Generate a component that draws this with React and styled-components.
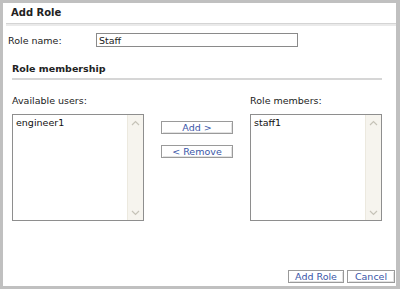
import React from "react";
import styled, { createGlobalStyle } from "styled-components";

const Global = createGlobalStyle`
  html, body {
    margin: 0;
    padding: 0;
    background: #c0c0c0;
  }
  body {
    font-family: "DejaVu Sans", Verdana, sans-serif;
    font-size: 9.5px;
    color: #222;
  }
`;

const Panel = styled.div`
  box-sizing: border-box;
  margin: 3px 4px 0 3px;
  height: 283px;
  background: #fff;
  display: flex;
  flex-direction: column;
`;

const Header = styled.div`
  font-weight: bold;
  font-size: 10px;
  padding: 4px 0 0 5px;
  height: 16px;
  margin-left: 3px;
  border-bottom: 1px solid #d4d4d4;
  box-shadow: 0 2px 0 #eaeaea;
`;

const Body = styled.div`
  flex: 1;
  padding: 0 14px 0 3px;
  display: flex;
  flex-direction: column;
`;

const FieldRow = styled.div`
  display: flex;
  align-items: center;
  margin-top: 9px;
`;

const Label = styled.label`
  box-sizing: border-box;
  width: 90px;
  padding-left: 2px;
`;

const TextInput = styled.input`
  box-sizing: border-box;
  width: 202px;
  height: 14px;
  border: 1px solid #8a8a8a;
  padding: 0 2px;
  font: inherit;
  color: #222;
  outline: none;
`;

const Section = styled.div`
  margin: 16px 0 0 6px;
  font-weight: bold;
  padding-bottom: 4px;
  border-bottom: 2px solid #d6d6d6;
`;

const Columns = styled.div`
  display: flex;
  align-items: flex-start;
  margin: 15px 0 0 6px;
`;

const ListColumn = styled.div`
  display: flex;
  flex-direction: column;
  width: 132px;
`;

const ListLabel = styled.div`
  height: 13px;
  margin-bottom: 6px;
`;

const ListBox = styled.div`
  box-sizing: border-box;
  height: 107px;
  border: 1px solid #8e8e8e;
  display: flex;
`;

const Items = styled.div`
  flex: 1;
  padding: 2px 3px;
  color: #111;
`;

const ScrollTrack = styled.div`
  width: 15px;
  background: #f6f4ee;
  border-left: 1px solid #ece9df;
  display: flex;
  flex-direction: column;
  justify-content: space-between;
`;

const Arrow = styled.div`
  height: 15px;
  display: flex;
  align-items: center;
  justify-content: center;
`;

const Middle = styled.div`
  flex: 1;
  display: flex;
  flex-direction: column;
  align-items: center;
  padding-top: 26px;
  gap: 11px;
`;

const Button = styled.button`
  box-sizing: border-box;
  width: ${p => p.$w}px;
  height: 13px;
  padding: 0;
  font: inherit;
  line-height: 10px;
  color: #3a56a8;
  background: #fff;
  border: 1px solid #9a9a9a;
  box-shadow: inset 1px 1px 0 #fff, inset -1px -1px 0 #e2e2e2;
`;

const Footer = styled.div`
  display: flex;
  justify-content: flex-end;
  gap: 3px;
  padding: 0 1px 3px 0;
  margin-top: auto;
`;

const Chevron = ({ up }) => (
  <svg width="9" height="6" viewBox="0 0 9 6">
    <path
      d={up ? "M1 5 L4.5 1.5 L8 5" : "M1 1 L4.5 4.5 L8 1"}
      fill="none"
      stroke="#c6c3b8"
      strokeWidth="1.2"
    />
  </svg>
);

const UserList = ({ title, items }) => (
  <ListColumn>
    <ListLabel>{title}</ListLabel>
    <ListBox>
      <Items>
        {items.map(i => (
          <div key={i}>{i}</div>
        ))}
      </Items>
      <ScrollTrack>
        <Arrow>
          <Chevron up />
        </Arrow>
        <Arrow>
          <Chevron />
        </Arrow>
      </ScrollTrack>
    </ListBox>
  </ListColumn>
);

export default function App() {
  return (
    <>
      <Global />
      <Panel>
        <Header>Add Role</Header>
        <Body>
          <FieldRow>
            <Label>Role name:</Label>
            <TextInput defaultValue="Staff" />
          </FieldRow>
          <Section>Role membership</Section>
          <Columns>
            <UserList title="Available users:" items={["engineer1"]} />
            <Middle>
              <Button $w={72}>Add &gt;</Button>
              <Button $w={72}>&lt; Remove</Button>
            </Middle>
            <UserList title="Role members:" items={["staff1"]} />
          </Columns>
        </Body>
        <Footer>
          <Button $w={56}>Add Role</Button>
          <Button $w={48}>Cancel</Button>
        </Footer>
      </Panel>
    </>
  );
}
